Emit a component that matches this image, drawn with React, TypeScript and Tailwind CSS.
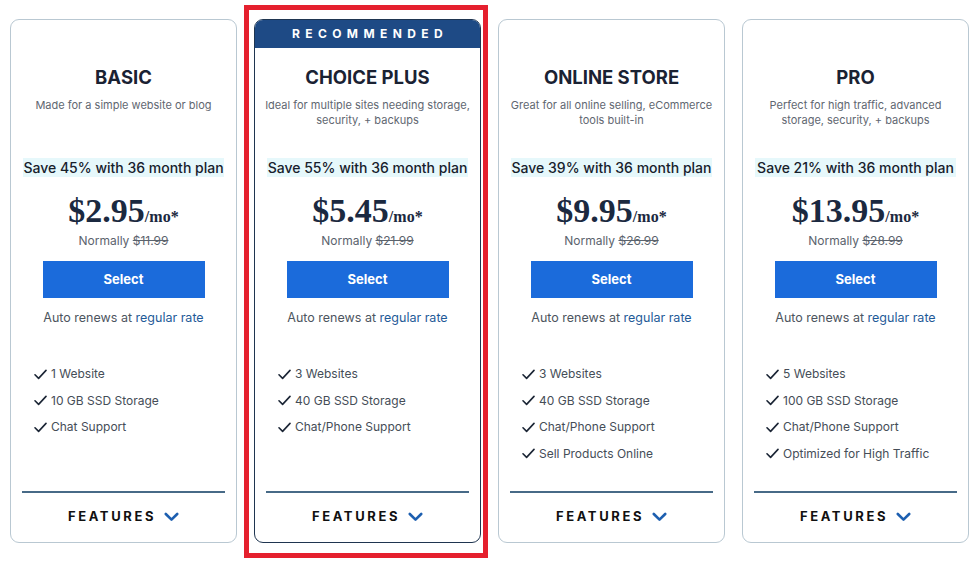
import React from "react";

type Plan = {
  name: string;
  desc: string[];
  save: string;
  price: string;
  normal: string;
  features: string[];
  recommended?: boolean;
};

const plans: Plan[] = [
  {
    name: "BASIC",
    desc: ["Made for a simple website or blog"],
    save: "Save 45% with 36 month plan",
    price: "$2.95",
    normal: "$11.99",
    features: ["1 Website", "10 GB SSD Storage", "Chat Support"],
  },
  {
    name: "CHOICE PLUS",
    desc: ["Ideal for multiple sites needing storage,", "security, + backups"],
    save: "Save 55% with 36 month plan",
    price: "$5.45",
    normal: "$21.99",
    features: ["3 Websites", "40 GB SSD Storage", "Chat/Phone Support"],
    recommended: true,
  },
  {
    name: "ONLINE STORE",
    desc: ["Great for all online selling, eCommerce", "tools built-in"],
    save: "Save 39% with 36 month plan",
    price: "$9.95",
    normal: "$26.99",
    features: ["3 Websites", "40 GB SSD Storage", "Chat/Phone Support", "Sell Products Online"],
  },
  {
    name: "PRO",
    desc: ["Perfect for high traffic, advanced", "storage, security, + backups"],
    save: "Save 21% with 36 month plan",
    price: "$13.95",
    normal: "$28.99",
    features: ["5 Websites", "100 GB SSD Storage", "Chat/Phone Support", "Optimized for High Traffic"],
  },
];

function Check() {
  return (
    <svg width="13" height="11" viewBox="0 0 13 11" fill="none" className="shrink-0">
      <path d="M1 5.8 L4.6 9.4 L12 1.4" stroke="#1b2535" strokeWidth="1.6" strokeLinecap="round" strokeLinejoin="round" />
    </svg>
  );
}

function Chevron() {
  return (
    <svg width="15" height="10" viewBox="0 0 15 10" fill="none">
      <path d="M1.8 2 L7.5 7.6 L13.2 2" stroke="#1d5fb0" strokeWidth="2.6" strokeLinecap="round" strokeLinejoin="round" />
    </svg>
  );
}

function Card({ p }: { p: Plan }) {
  return (
    <div
      className={
        "relative w-[227px] h-[524px] shrink-0 flex flex-col bg-white rounded-[9px] border " +
        (p.recommended ? "border-[#1f3550]" : "border-[#b9c8d2]")
      }
    >
      {p.recommended && (
        <div className="pointer-events-none absolute -left-[11px] -top-[15px] -right-[8px] -bottom-[16px] border-[5px] border-[#e5202e]" />
      )}
      {p.recommended ? (
        <div className="h-[28px] rounded-t-[8px] bg-[#1e4a85] flex items-center justify-center text-white text-[12px] font-bold tracking-[0.45em] pl-[5px]">
          RECOMMENDED
        </div>
      ) : (
        <div className="h-[28px]" />
      )}
      <div className="mt-[17px] text-center text-[18.5px] leading-[24px] font-bold text-[#1a2233]">{p.name}</div>
      <div className="mt-[9px] h-[60px] text-center text-[11px] leading-[15px] text-[#5f6771]">
        {p.desc.map((d) => (
          <div key={d}>{d}</div>
        ))}
      </div>
      <div className="mx-[12px] h-[19px] bg-[#e6f8fb] flex items-center justify-center text-[14px] font-medium text-[#17212c] whitespace-nowrap">
        {p.save}
      </div>
      <div className="mt-[16px] flex items-baseline justify-center text-[#1b2940] font-bold" style={{ fontFamily: '"Liberation Serif", serif' }}>
        <span className="text-[34px] leading-[35px]">{p.price}</span>
        <span className="text-[16px]">/mo*</span>
      </div>
      <div className="mt-[4px] text-center text-[12px] leading-[16px] text-[#5b636d]">
        Normally <span className="line-through">{p.normal}</span>
      </div>
      <div className="mt-[12px] mx-auto w-[162px] h-[37px] bg-[#1b6bdb] flex items-center justify-center text-white text-[13px] font-bold">
        Select
      </div>
      <div className="mt-[12px] text-center text-[12.5px] leading-[16px] text-[#4d5560]">
        Auto renews at <span className="text-[#1f5b98]">regular rate</span>
      </div>
      <div className="mt-[40px] pl-[23px] flex flex-col gap-[10.5px]">
        {p.features.map((f) => (
          <div key={f} className="flex items-center gap-[4px] text-[12px] leading-[16px] text-[#454d57]">
            <Check />
            <span>{f}</span>
          </div>
        ))}
      </div>
      <div className="flex-1" />
      <div className="mx-[11px] h-[2px] bg-[#476a87]" />
      <div className="h-[49px] flex items-center justify-center gap-[8px] pb-[2px]">
        <span className="text-[13px] font-bold tracking-[0.2em] text-[#111]">FEATURES</span>
        <Chevron />
      </div>
    </div>
  );
}

export default function App() {
  return (
    <div className="w-[980px] h-[582px] bg-white overflow-hidden" style={{ fontFamily: 'Inter, "Noto Sans", sans-serif' }}>
      <div className="flex gap-[17px] pl-[10px] pt-[19px]">
        {plans.map((p) => (
          <Card key={p.name} p={p} />
        ))}
      </div>
    </div>
  );
}
